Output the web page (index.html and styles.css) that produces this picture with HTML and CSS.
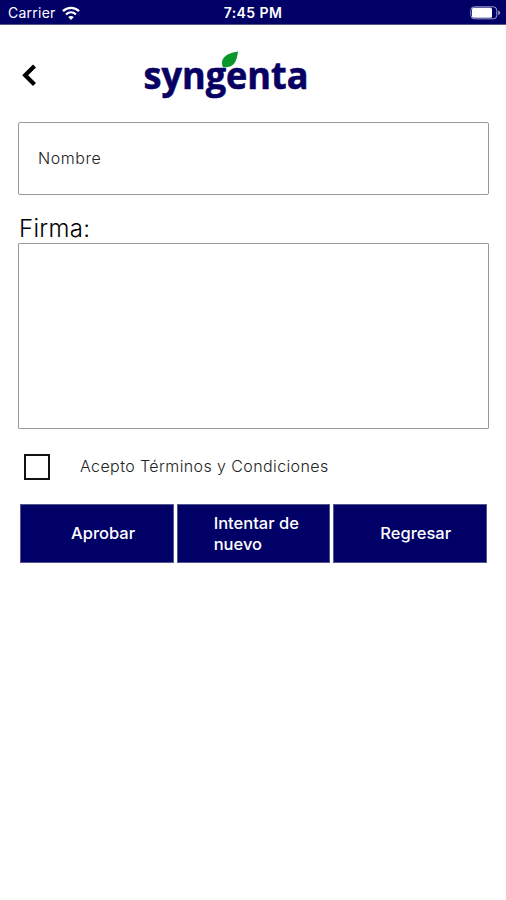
FILE: index.html
```html
<!DOCTYPE html>
<html lang="es">
<head>
    <meta charset="UTF-8">
    <meta name="viewport" content="width=device-width, initial-scale=1.0">
    <title>Firma</title>
    <link rel="stylesheet" href="styles.css">
</head>
<body>
    <div class="status-bar">
        <div class="carrier">
            <span class="carrier-name">Carrier</span>
            <svg class="wifi" width="18" height="14" viewBox="0 0 18 14">
                <path d="M1 5.2C5.5 .8 12.5 .8 17 5.2" fill="none" stroke="#fff" stroke-width="2.4"/>
                <path d="M4 8.5C7 5.7 11 5.7 14 8.5" fill="none" stroke="#fff" stroke-width="2.2"/>
                <path d="M9 14L6.2 11C7.8 9.6 10.2 9.6 11.8 11Z" fill="#fff"/>
            </svg>
        </div>
        <div class="time">7:45 PM</div>
        <svg class="battery" width="31" height="14" viewBox="0 0 31 14">
            <rect x=".8" y=".8" width="26" height="12" rx="3.5" fill="none" stroke="#9c9cce" stroke-width="1"/>
            <rect x="2" y="1.8" width="20" height="10" rx="1.5" fill="#fff"/>
            <path d="M28.2 4.5C30.8 5.5 30.8 8.1 28.2 9.1Z" fill="#9c9cce"/>
        </svg>
    </div>

    <header class="header">
        <button class="back" aria-label="Regresar">
            <svg width="18" height="24" viewBox="0 0 18 24">
                <path d="M14.5 3L5.2 12.2L14.5 21.4" fill="none" stroke="#000" stroke-width="4.2"/>
            </svg>
        </button>
        <svg class="logo" width="190" height="70" viewBox="0 0 190 70">
            <text class="logo-text" x="3.5" y="44" textLength="165" lengthAdjust="spacingAndGlyphs">syngenta</text>
            <path d="M83 22.3C80 16 83 8.5 98 6.5C96.5 17 94 23 83 22.3Z" fill="#0b962c"/>
        </svg>
    </header>

    <main class="content">
        <input type="text" class="name" placeholder="Nombre">
        <label class="sign-label">Firma:</label>
        <div class="signature"></div>
        <label class="terms">
            <input type="checkbox" class="check">
            <span class="terms-text">Acepto Términos y Condiciones</span>
        </label>
        <div class="buttons">
            <button class="btn approve">Aprobar</button>
            <button class="btn retry">Intentar de<br>nuevo</button>
            <button class="btn return">Regresar</button>
        </div>
    </main>
</body>
</html>
```
FILE: styles.css
```css
* {
    box-sizing: border-box;
}
body {
    margin: 0;
    background-color: #fff;
    font-family: Inter, "Liberation Sans", sans-serif;
    color: #222;
}
button {
    font-family: inherit;
    border: none;
    padding: 0;
}
.status-bar {
    display: grid;
    grid-template-columns: 1fr auto 1fr;
    align-items: center;
    height: 25px;
    padding: 1px 5px 0 8px;
    background-color: #000066;
    border-bottom: 1px solid #55558f;
    color: #fff;
}
.carrier {
    display: flex;
    align-items: center;
    gap: 6px;
    font-size: 14px;
    letter-spacing: 0.25px;
}
.time {
    padding-right: 3px;
    font-size: 14px;
    font-weight: 600;
    letter-spacing: 0.4px;
}
.battery {
    justify-self: end;
}
.header {
    display: flex;
    height: 97px;
    padding: 20px 20px 0;
}
.back {
    display: flex;
    width: 120px;
    padding-top: 18px;
    background: none;
}
.logo {
    overflow: visible;
}
.logo-text {
    font-family: "Open Sans", "Noto Sans", sans-serif;
    font-size: 37.5px;
    font-weight: 700;
    fill: #080062;
    stroke: #080062;
    stroke-width: 0.6px;
}
.content {
    display: flex;
    flex-direction: column;
    padding: 0 17px 0 18px;
}
.name {
    height: 73px;
    padding: 0 19px 2px;
    border: 1.5px solid #999;
    border-radius: 2px;
    font-family: inherit;
    font-size: 16px;
    font-weight: 300;
    letter-spacing: 0.55px;
}
.name::placeholder {
    color: #222;
    opacity: 1;
}
.sign-label {
    height: 48px;
    padding: 20px 0 0 1px;
    font-size: 24px;
    font-weight: 300;
    line-height: 28px;
    letter-spacing: 0.3px;
    color: #000;
}
.signature {
    height: 186px;
    border: 1.5px solid #999;
    border-radius: 1px;
}
.terms {
    display: flex;
    align-items: center;
    gap: 30px;
    height: 75px;
    padding-left: 6px;
}
.check {
    appearance: none;
    width: 26px;
    height: 26px;
    margin: 0;
    border: 2px solid #111;
}
.terms-text {
    padding-bottom: 1px;
    font-size: 16px;
    font-weight: 300;
    letter-spacing: 0.4px;
}
.buttons {
    display: grid;
    grid-template-columns: repeat(3, 1fr);
    gap: 3px;
    padding: 0 2px;
}
.btn {
    height: 59px;
    border: 1px solid #55558f;
    background-color: #000066;
    color: #fff;
    font-size: 16.5px;
    font-weight: 500;
    line-height: 21px;
    text-align: left;
}
.approve {
    padding-left: 50px;
}
.retry {
    padding-left: 36px;
}
.return {
    padding-left: 46px;
}
```
